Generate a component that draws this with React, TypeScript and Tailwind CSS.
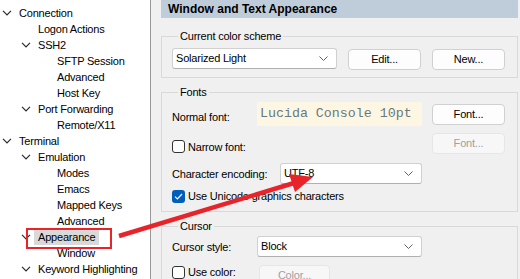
import React from "react";

type Node = { l: number; t: string; c?: boolean; sel?: boolean };

const tree: Node[] = [
  { l: 0, t: "Connection", c: true },
  { l: 1, t: "Logon Actions" },
  { l: 1, t: "SSH2", c: true },
  { l: 2, t: "SFTP Session" },
  { l: 2, t: "Advanced" },
  { l: 2, t: "Host Key" },
  { l: 1, t: "Port Forwarding", c: true },
  { l: 2, t: "Remote/X11" },
  { l: 0, t: "Terminal", c: true },
  { l: 1, t: "Emulation", c: true },
  { l: 2, t: "Modes" },
  { l: 2, t: "Emacs" },
  { l: 2, t: "Mapped Keys" },
  { l: 2, t: "Advanced" },
  { l: 1, t: "Appearance", c: true, sel: true },
  { l: 2, t: "Window" },
  { l: 1, t: "Keyword Highlighting", c: true },
];

const indent: Record<number, string> = { 0: "pl-0", 1: "pl-[19px]", 2: "pl-[38px]" };

function TreeChevron() {
  return (
    <svg width="10" height="6" viewBox="0 0 10 6" className="ml-[2px]">
      <path d="M1 0.8 L5 4.8 L9 0.8" fill="none" stroke="#2b2b2b" strokeWidth="1.2" />
    </svg>
  );
}

function ComboChevron() {
  return (
    <svg width="9" height="5" viewBox="0 0 9 5">
      <path d="M0.5 0.5 L4.5 4.5 L8.5 0.5" fill="none" stroke="#606060" strokeWidth="1" />
    </svg>
  );
}

function Combo({ value, w }: { value: string; w: string }) {
  return (
    <div
      className={`${w} h-[21px] flex items-center justify-between bg-white border border-[#d0d0d0] border-b-[#b0b0b0] rounded-[3px] pl-[3px] pr-[8px]`}
    >
      <span className="leading-[19px]">{value}</span>
      <ComboChevron />
    </div>
  );
}

function Btn({ label, disabled, cls = "" }: { label: string; disabled?: boolean; cls?: string }) {
  return (
    <div
      className={`h-[21px] flex items-center justify-center rounded-[4px] border ${
        disabled ? "bg-[#f7f7f7] border-[#e6e6e6] text-[#a0a0a0]" : "bg-[#fdfdfd] border-[#d0d0d0] text-black"
      } ${cls}`}
    >
      {label}
    </div>
  );
}

function Check({ checked }: { checked?: boolean }) {
  return checked ? (
    <div className="w-[13px] h-[13px] rounded-[3px] bg-[#005fb8] flex items-center justify-center">
      <svg width="9" height="7" viewBox="0 0 9 7">
        <path d="M1 3.6 L3.4 6 L8 1" fill="none" stroke="white" strokeWidth="1.2" />
      </svg>
    </div>
  ) : (
    <div className="w-[13px] h-[13px] rounded-[3px] border border-[#333333] bg-white" />
  );
}

function Group({ title, children, cls = "" }: { title: string; children: React.ReactNode; cls?: string }) {
  return (
    <fieldset className={`border border-[#d9d9d9] pl-[10px] pr-[11px] ${cls}`}>
      <legend className="ml-[6px] px-[2px] leading-[16px]">{title}</legend>
      {children}
    </fieldset>
  );
}

export default function App() {
  return (
    <div
      className="relative w-[520px] h-[279px] overflow-hidden flex bg-[#f0f0f0] text-black text-[11px] tracking-[-0.2px]"
      style={{ fontFamily: '"Liberation Sans", Arial, sans-serif' }}
    >
      {/* Tree */}
      <div className="w-[151px] h-full bg-white border-r border-[#999999] pt-[5px] shrink-0">
        {tree.map((n, i) => (
          <div key={i} className={`relative flex items-center h-[16px] ${indent[n.l]}`}>
            <div className="w-[19px] flex items-center">{n.c && <TreeChevron />}</div>
            {n.sel ? (
              <span className="bg-[#d9d9d9] -ml-[4px] px-[4px] leading-[16px]">{n.t}</span>
            ) : (
              <span className="leading-[16px] whitespace-nowrap">{n.t}</span>
            )}
            {n.sel && <div className="absolute left-[26px] -top-[1px] w-[86px] h-[21px] border-2 border-[#e8232a]" />}
          </div>
        ))}
      </div>

      {/* Right panel */}
      <div className="flex-1 ml-[10px] mr-[2px] flex flex-col">
        <div className="h-[18px] bg-[#bfcddb] pl-[7px] text-[12px] font-bold leading-[18px] tracking-normal whitespace-nowrap">
          Window and Text Appearance
        </div>

        <Group title="Current color scheme" cls="mt-[10px] pt-[4px] pb-[7px]">
          <div className="flex items-start">
            <Combo value="Solarized Light" w="w-[165px]" />
            <Btn label="Edit..." cls="w-[73px] ml-[11px] mt-[1px]" />
            <Btn label="New..." cls="w-[73px] ml-[11px] mt-[1px]" />
          </div>
        </Group>

        <Group title="Fonts" cls="mt-[6px] pt-[2px] pb-[8px]">
          <div className="flex items-start">
            <span className="w-[85px] mt-[7px] leading-[16px]">Normal font:</span>
            <div
              className="w-[165px] h-[24px] bg-[#fdf6e3] pl-[3px] text-[13.3px] leading-[24px] tracking-normal text-[#657b83] whitespace-nowrap"
              style={{ fontFamily: '"Liberation Mono", "Courier New", monospace' }}
            >
              Lucida Console 10pt
            </div>
            <Btn label="Font..." cls="w-[73px] ml-[10px] mt-[2px]" />
          </div>
          <div className="flex items-start mt-[7px]">
            <div className="w-[260px] mt-[7px] flex items-center h-[13px] gap-[3px]">
              <Check />
              <span className="leading-[16px]">Narrow font:</span>
            </div>
            <Btn label="Font..." disabled cls="w-[73px]" />
          </div>
          <div className="flex items-start mt-[9px]">
            <span className="w-[108px] mt-[3px] leading-[16px]">Character encoding:</span>
            <Combo value="UTF-8" w="w-[142px]" />
          </div>
          <div className="flex items-center h-[14px] mt-[5px] gap-[3px]">
            <Check checked />
            <span className="leading-[16px]">Use Unicode graphics characters</span>
          </div>
        </Group>

        <Group title="Cursor" cls="mt-[6px] pt-[2px] pb-[8px]">
          <div className="flex items-start">
            <span className="w-[85px] mt-[3px] leading-[16px]">Cursor style:</span>
            <Combo value="Block" w="w-[165px]" />
          </div>
          <div className="flex items-start mt-[8px]">
            <div className="w-[87px] flex items-center h-[14px] gap-[3px]">
              <Check />
              <span className="leading-[16px]">Use color:</span>
            </div>
            <Btn label="Color..." disabled cls="w-[71px]" />
          </div>
        </Group>
      </div>

      {/* Annotation arrow */}
      <svg className="absolute inset-0 pointer-events-none" width="520" height="279" viewBox="0 0 520 279">
        <line x1="119" y1="236" x2="294" y2="183" stroke="#e8232a" strokeWidth="4.5" />
        <polygon points="313,177 289,174 295,192" fill="#e8232a" />
      </svg>
    </div>
  );
}
